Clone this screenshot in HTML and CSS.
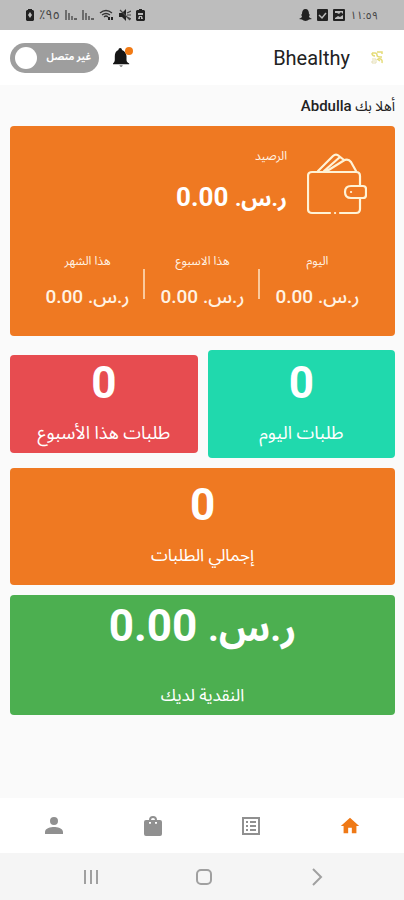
FILE: index.html
```html
<!DOCTYPE html>
<html lang="ar" dir="rtl">
<head>
  <meta charset="UTF-8" />
  <meta name="viewport" content="width=device-width, initial-scale=1.0"/>
  <title>Bhealthy</title>
  <link rel="stylesheet" href="styles.css">
</head>
<body>

<div class="status-bar">
  <div class="status-group">
    <span class="clock">١١:٥٩</span>
    <svg width="12" height="12" viewBox="0 0 12 12"><path fill="#222" fill-rule="evenodd" d="M1 0h10q1 0 1 1v10q0 1-1 1H1q-1 0-1-1V1q0-1 1-1zM2 2v2h2l2 1 2-2 2 2V2zM2 9l3-2 2 1 3-2v4H2z"/></svg>
    <svg width="11" height="12" viewBox="0 0 11 12"><rect width="11" height="12" rx="1" fill="#222"/><path d="M2 6l3 3 4-5" fill="none" stroke="#bbb" stroke-width="1.500"/></svg>
    <svg width="13" height="12" viewBox="0 0 13 12"><path fill="#222" d="M6.500 0C4 0 3 2 3 5L2 6l1 1C3 8.500 2 9 0 10l3 .5 1.500 1L6.500 12l2-.5 1.500-1 3-.5c-2-1-3-1.500-3-3l1-1-1-1C10 2 9 0 6.500 0z"/></svg>
  </div>
  <div class="status-group">
    <svg width="9" height="12" viewBox="0 0 9 12"><path fill="#222" fill-rule="evenodd" d="M3 0h3v1h2l1 1v9l-1 1H1l-1-1V2l1-1h2zM2 4v2h5V4zM3 7l-1 3h2V8h1v2h2L6 7z"/></svg>
    <svg width="12" height="12" viewBox="0 0 12 12"><path fill="#222" d="M0 4h3l4-4v12L3 8H0z"/><path d="M1 1l10 10M8 4l4-2M8 6h4M8 8l4 2" stroke="#444" stroke-width="1.200"/></svg>
    <svg width="15" height="12" viewBox="0 0 15 12"><path d="M1 4q6-5 12 0M3 6q4-3 8 0M5 8q2-2 4 0" fill="none" stroke="#333" stroke-width="1.300"/><path d="M10 11V8M13 8v3" stroke="#222" stroke-width="2"/></svg>
    <svg width="12" height="12" viewBox="0 0 12 12"><path d="M1 1v10M4 4v7M7 7v4M9 10h3" fill="none" stroke="#444" stroke-width="1.300"/></svg>
    <svg width="12" height="12" viewBox="0 0 12 12"><path d="M1 1v10M4 4v7M7 7v4M9 10h3" fill="none" stroke="#444" stroke-width="1.300"/></svg>
    <span class="battery">٩٥٪</span>
    <svg width="8" height="12" viewBox="0 0 8 12"><path fill="#222" fill-rule="evenodd" d="M2 0h4v1h1l1 1v9l-1 1H1l-1-1V2l1-1h1zM4 3L2 6l2 3 2-3z"/></svg>
  </div>
</div>

<header class="app-bar">
  <div class="brand">
    <svg width="14" height="14" viewBox="0 0 14 14" fill="none"><path d="M2 2h3q2 0 2 2t3 2h2M5 5q-3 0-3-3M7 1h5v2M8 8q5-1 4 4M7 8l3 2" stroke="#e5dc78" stroke-width="1.500"/><path d="M2 8h4v4H2v-2h3" stroke="#e4ddb4"/></svg>
    <h1 dir="ltr">Bhealthy</h1>
  </div>
  <div class="actions">
    <button class="bell" aria-label="الإشعارات">
      <svg width="18" height="22" viewBox="0 0 20 22"><path fill="#161616" d="M8 0c1 0 2 1 2 2 3 1 5 4 5 7v4c0 2 1 3 3 4v1H0v-1c1-1 2-2 2-4V9c0-3 1-6 4-7 0-1 1-2 2-2z"/><path fill="#777" d="M7 19h4q-2 4-4 0z"/></svg>
      <span class="dot"></span>
    </button>
    <label class="switch">
      <input type="checkbox">
      <span>غير متصل</span>
    </label>
  </div>
</header>

<main class="content">
  <p class="greeting">أهلا بك <b>Abdulla</b></p>

  <section class="balance">
    <div class="balance-top">
      <svg class="wallet" width="60" height="62" viewBox="0 0 60 62" fill="none" stroke="#fff3d6" stroke-width="2.200" stroke-linecap="round" stroke-linejoin="round">
        <path d="M23 60H5q-4 0-4-4V23q0-4 4-4h44q4 0 4 4v10M53 45v11q0 4-4 4H33"/>
        <path d="M28 60h.1"/>
        <path d="M11 18L26 3q3-3 6 0l5 4M20 18L36 8q5-3 8 1l5 9M17 18l16-14"/>
        <path d="M59 36v6q0 3-3 3H44q-6 0-6-6t6-6h12q3 0 3 3zM44 39h.1"/>
      </svg>
      <div>
        <p class="label">الرصيد</p>
        <p class="amount"><span class="currency">ر.س.</span> 0.00</p>
      </div>
    </div>
    <div class="periods">
      <div class="period">
        <p class="label">اليوم</p>
        <p class="amount">ر.س. 0.00</p>
      </div>
      <div class="period">
        <p class="label">هذا الاسبوع</p>
        <p class="amount">ر.س. 0.00</p>
      </div>
      <div class="period">
        <p class="label">هذا الشهر</p>
        <p class="amount">ر.س. 0.00</p>
      </div>
    </div>
  </section>

  <div class="stats">
    <section class="stat teal">
      <p class="count">0</p>
      <p class="caption">طلبات اليوم</p>
    </section>
    <section class="stat red">
      <p class="count">0</p>
      <p class="caption">طلبات هذا الأسبوع</p>
    </section>
    <section class="stat wide orange">
      <p class="count">0</p>
      <p class="caption">إجمالي الطلبات</p>
    </section>
    <section class="stat wide green">
      <p class="count"><span class="currency">ر.س.</span> 0.00</p>
      <p class="caption">النقدية لديك</p>
    </section>
  </div>
</main>

<nav class="tabs">
  <a href="#" class="active" aria-label="الرئيسية"><svg width="22" height="22" viewBox="0 0 24 24"><path fill="currentColor" d="M10 20v-6h4v6h5v-8h3L12 3 2 12h3v8z"/></svg></a>
  <a href="#" aria-label="الطلبات"><svg width="24" height="24" viewBox="0 0 24 24"><path fill="currentColor" d="M19 5v14H5V5h14m2-2H3v18h18V3zM11 7h6v2h-6V7zm0 4h6v2h-6v-2zm0 4h6v2h-6v-2zM7 7h2v2H7V7zm0 4h2v2H7v-2zm0 4h2v2H7v-2z"/></svg></a>
  <a href="#" aria-label="المتجر"><svg width="24" height="24" viewBox="0 0 24 24"><path fill="currentColor" fill-rule="evenodd" d="M5 6h3a4 4 0 0 1 8 0h3q2 0 2 2v12q0 2-2 2H5q-2 0-2-2V8q0-2 2-2zm5 0h4a2 2 0 0 0-4 0zM8 8v1a1 1 0 0 0 2 0V8zm6 0v1a1 1 0 0 0 2 0V8z"/></svg></a>
  <a href="#" aria-label="الحساب"><svg width="24" height="24" viewBox="0 0 24 24"><path fill="currentColor" d="M12 11a4 4 0 1 0 0-8 4 4 0 0 0 0 8zm0 2c-3 0-9 1-9 5v2h18v-2c0-4-6-5-9-5z"/></svg></a>
</nav>

<div class="system-nav">
  <button aria-label="رجوع"><svg width="18" height="18" viewBox="0 0 18 18"><path d="M5 1l8 8-8 8"/></svg></button>
  <button aria-label="الشاشة الرئيسية"><svg width="18" height="18" viewBox="0 0 18 18"><rect x="2" y="2" width="14" height="14" rx="4"/></svg></button>
  <button aria-label="التطبيقات"><svg width="18" height="18" viewBox="0 0 18 18"><path d="M3 2v14M9 2v14M15 2v14"/></svg></button>
</div>

</body>
</html>
```
FILE: styles.css
```css
* {
  box-sizing: border-box;
}

body {
  margin: 0;
  min-height: 100vh;
  display: flex;
  flex-direction: column;
  font-family: Roboto, "Noto Sans Arabic", "DejaVu Sans", sans-serif;
  background: #fafafa;
  color: #222;
}

h1, p {
  margin: 0;
}

svg {
  display: block;
}

button {
  padding: 0;
  border: none;
  background: none;
  cursor: pointer;
}

.status-bar {
  height: 30px;
  padding: 0 26px;
  display: flex;
  align-items: center;
  justify-content: space-between;
  background: #bdbdbd;
  font-size: 11px;
  color: #444;
}

.status-group {
  display: flex;
  align-items: center;
  gap: 5px;
}

.battery {
  font-size: 13px;
}

.app-bar {
  height: 55px;
  padding: 0 20px 0 10px;
  display: flex;
  align-items: center;
  justify-content: space-between;
  background: #fff;
}

.brand, .actions {
  display: flex;
  align-items: center;
  gap: 20px;
}

.brand h1 {
  font-size: 20px;
  font-weight: 400;
}

.actions {
  gap: 14px;
}

.bell {
  position: relative;
}

.bell .dot {
  position: absolute;
  top: 0;
  right: -2px;
  width: 8px;
  height: 8px;
  border-radius: 50%;
  background: #f17a14;
}

.switch {
  width: 89px;
  height: 30px;
  padding: 0 8px 0 5px;
  display: flex;
  align-items: center;
  justify-content: space-between;
  flex-direction: row-reverse;
  border-radius: 15px;
  background: #9e9e9e;
  color: #fff;
  font-size: 10px;
  font-weight: bold;
}

.switch span {
  padding-bottom: 2px;
}

.switch input {
  appearance: none;
  width: 22px;
  height: 22px;
  margin: 0;
  border-radius: 50%;
  background: #fff;
}

.content {
  flex: 1;
  padding: 10px 9px 10px 10px;
}

.greeting {
  margin-bottom: 9px;
  font-size: 14px;
  line-height: 22px;
}

.greeting b {
  font-size: 15px;
  font-weight: 500;
}

.balance {
  padding: 18px 28px 23px;
  min-height: 210px;
  display: flex;
  flex-direction: column;
  justify-content: space-between;
  border-radius: 4px;
  background: #ef7922;
  color: #fff3e4;
}

.balance-top {
  display: flex;
  align-items: flex-end;
  gap: 20px;
}

.label {
  font-size: 12px;
  line-height: 24px;
}

.balance-top .amount {
  margin-top: 12px;
  font-size: 26px;
  font-weight: 700;
  line-height: 34px;
  color: #fff;
}

.currency {
  font-size: 0.85em;
}

.periods {
  display: grid;
  grid-template-columns: repeat(3, 1fr);
  margin: 0 -8px;
  text-align: center;
}

.period {
  position: relative;
}

.period + .period::before {
  content: "";
  position: absolute;
  top: 20px;
  right: 0;
  width: 2px;
  height: 30px;
  background: #fbc99c;
}

.period .amount {
  margin-top: 8px;
  font-size: 19px;
  font-weight: 500;
  line-height: 32px;
}

.stats {
  margin-top: 14px;
  display: grid;
  grid-template-columns: 1fr 1fr;
  align-items: center;
  gap: 10px;
}

.stat {
  border-radius: 4px;
  text-align: center;
  color: #fff;
}

.count {
  font-size: 44px;
  font-weight: 700;
  line-height: 50px;
}

.caption {
  margin-top: 10px;
  font-size: 18px;
  line-height: 30px;
}

.teal {
  padding: 8px 8px 10px;
  background: #20d9ad;
}

.red {
  padding: 3px 8px 5px;
  background: #e74c50;
}

.wide {
  grid-column: 1 / -1;
}

.wide .caption {
  font-size: 17px;
}

.orange {
  padding: 12px 8px 15px;
  background: #ef7922;
}

.green {
  padding: 6px 8px 5px;
  background: #4caf50;
}

.green .caption {
  margin-top: 27px;
}

.tabs {
  height: 55px;
  padding: 0 5px;
  display: flex;
  align-items: center;
  background: #fff;
}

.tabs a {
  flex: 1;
  display: flex;
  justify-content: center;
  color: #909090;
}

.tabs .active {
  color: #ef7916;
}

.system-nav {
  height: 47px;
  padding: 0 30px 0 34px;
  display: flex;
  align-items: center;
  background: #f5f5f5;
}

.system-nav button {
  flex: 1;
  display: flex;
  justify-content: center;
}

.system-nav svg {
  fill: none;
  stroke: #a0a0a0;
  stroke-width: 2;
}
```
